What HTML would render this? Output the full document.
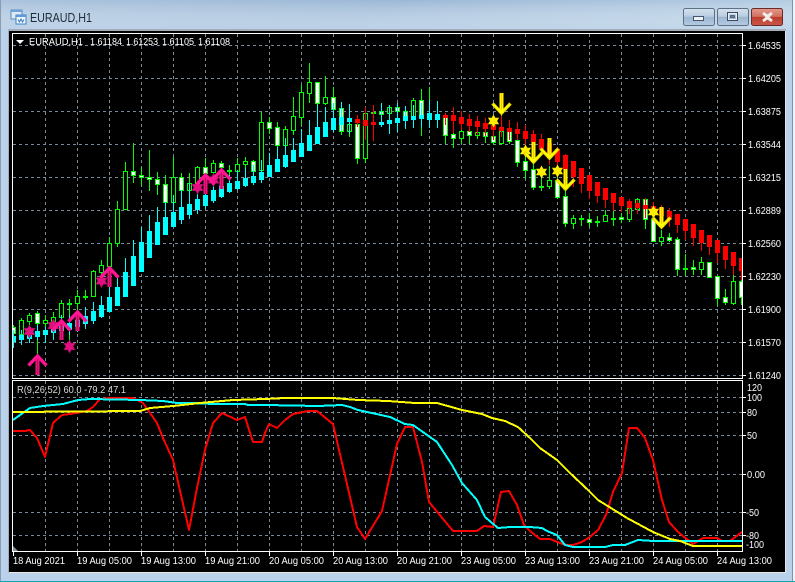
<!DOCTYPE html>
<html><head><meta charset="utf-8"><title>EURAUD,H1</title>
<style>
html,body{margin:0;padding:0;background:#fff;width:795px;height:582px;overflow:hidden}
svg{display:block}
text{font-family:"Liberation Sans",sans-serif;font-size:10px;fill:#fff}
.c{shape-rendering:crispEdges}
</style></head><body>
<svg width="795" height="582" viewBox="0 0 795 582" xmlns="http://www.w3.org/2000/svg">
<defs>
<linearGradient id="tb" x1="0" y1="0" x2="1" y2="0.15"><stop offset="0" stop-color="#a9c2dc"/><stop offset=".5" stop-color="#9cb8d6"/><stop offset="1" stop-color="#b5cde3"/></linearGradient>
<linearGradient id="tb2" x1="0" y1="0" x2="0" y2="1"><stop offset="0" stop-color="#fff" stop-opacity="0"/><stop offset="1" stop-color="#c4d8ec" stop-opacity=".75"/></linearGradient>
<linearGradient id="bb" x1="0" y1="0" x2="0" y2="1"><stop offset="0" stop-color="#d6e2ee"/><stop offset=".48" stop-color="#b7cbe0"/><stop offset=".5" stop-color="#9db6d0"/><stop offset="1" stop-color="#b4cbe2"/></linearGradient>
<linearGradient id="br" x1="0" y1="0" x2="0" y2="1"><stop offset="0" stop-color="#e29a8c"/><stop offset=".48" stop-color="#d2705f"/><stop offset=".5" stop-color="#bd3b2a"/><stop offset="1" stop-color="#c9584a"/></linearGradient>
<path id="st" d="M0-6.5 1.8-3.2 5.6-3.2 3.6 0 5.6 3.2 1.8 3.2 0 6.5-1.8 3.2-5.6 3.2-3.6 0-5.6-3.2-1.8-3.2Z"/>
<g id="ua" fill="none"><path d="M-9 10.5 0 1 9 10.5" stroke="#ff1493" stroke-width="3.4"/><path d="M0 1V20" stroke="#ff1493" stroke-width="4"/><path d="M0 4V20" stroke="#c00f50" stroke-width="1.6"/></g>
<g id="da" fill="none"><path d="M-9-10.5 0-1 9-10.5" stroke="#e8d800" stroke-width="3.4"/><path d="M0-1V-21" stroke="#ffff00" stroke-width="4"/><path d="M0-4V-21" stroke="#ffc800" stroke-width="1.4"/><path d="M-8-9.5 0-1.5 8-9.5" stroke="#ffff00" stroke-width="1.6"/></g>
</defs>

<rect width="795" height="582" fill="#b9d1ea"/>
<rect width="795" height="30" fill="url(#tb)"/>
<rect width="795" height="30" fill="url(#tb2)"/>
<rect x="793" y="0" width="2" height="582" fill="#eef3f8"/>
<rect x="0" y="581" width="795" height="1" fill="#17a2b0"/>
<rect x="0" y="0" width="1" height="581" fill="#8a9cb0"/>
<rect x="792" y="0" width="1" height="581" fill="#7d93a8"/>
<rect x="8" y="29" width="778" height="544" fill="#a5aeb8"/>
<rect x="9" y="31" width="776" height="541" fill="#000"/>
<rect x="785" y="31" width="1" height="541" fill="#e6e6e6"/>
<rect x="9" y="572" width="777" height="1" fill="#e8e8e8"/>

<!-- title -->
<g class="c">
<rect x="11" y="10" width="11" height="9" fill="#dfeaf6" stroke="#5b8fc4"/>
<rect x="16" y="15" width="10" height="9" fill="#f3f8fd" stroke="#3d82c8"/>
<rect x="11" y="10" width="11" height="2" fill="#6fa3d8"/>
<rect x="16" y="15" width="10" height="2" fill="#5f9ad6"/>
</g>
<path d="M18 19.5l1.5 2.5 1.5-3 1.5 3 1.5-2.5" fill="none" stroke="#2f78bf"/>
<text x="30" y="22" style="font-size:12.5px;fill:#1c2a38" textLength="62" lengthAdjust="spacingAndGlyphs">EURAUD,H1</text>

<!-- buttons -->
<g>
<rect x="683.5" y="8.5" width="31" height="17" rx="2" fill="url(#bb)" stroke="#5d7186"/>
<rect x="717.5" y="8.5" width="31" height="17" rx="2" fill="url(#bb)" stroke="#5d7186"/>
<rect x="751.5" y="8.5" width="31" height="17" rx="2" fill="url(#br)" stroke="#6b2a25"/>
<rect x="693.5" y="16.5" width="10" height="4" fill="#eef2f6" stroke="#46566a"/>
<rect x="727.5" y="12.5" width="10" height="8" fill="none" stroke="#3d4c5e"/>
<rect x="728.5" y="13.5" width="8" height="6" fill="none" stroke="#e6edf4"/>
<rect x="730.5" y="15.5" width="4" height="2" fill="#6d8096" stroke="#2f3c4b" stroke-width=".6"/>
<path d="M763 13l4.5 3 4.5-3M763 21l4.5-3 4.5 3M763 13l9 8M772 13l-9 8" fill="none" stroke="#f0ecea" stroke-width="2.6"/>
</g>

<!-- grid -->
<g class="c" fill="none" stroke="#778899" stroke-dasharray="3 3">
<path d="M13 45.5H742M13 78.5H742M13 111.5H742M13 144.5H742M13 177.5H742M13 210.5H742M13 243.5H742M13 276.5H742M13 309.5H742M13 342.5H742M13 375.5H742"/>
<path d="M45.5 34V378M77.5 34V378M109.5 34V378M141.5 34V378M173.5 34V378M205.5 34V378M237.5 34V378M269.5 34V378M301.5 34V378M333.5 34V378M365.5 34V378M397.5 34V378M429.5 34V378M461.5 34V378M493.5 34V378M525.5 34V378M557.5 34V378M589.5 34V378M621.5 34V378M653.5 34V378M685.5 34V378M717.5 34V378"/>
<path d="M13 397.5H742M13 412.5H742M13 435.5H742M13 474.5H742M13 512.5H742M13 535.5H742"/>
<path d="M45.5 381V551M77.5 381V551M109.5 381V551M141.5 381V551M173.5 381V551M205.5 381V551M237.5 381V551M269.5 381V551M301.5 381V551M333.5 381V551M365.5 381V551M397.5 381V551M429.5 381V551M461.5 381V551M493.5 381V551M525.5 381V551M557.5 381V551M589.5 381V551M621.5 381V551M653.5 381V551M685.5 381V551M717.5 381V551"/>
</g>

<!-- candles -->
<svg x="13" y="34" width="729" height="344" viewBox="13 34 729 344" overflow="hidden">
<g class="c">
<path fill="none" stroke="#00ff00" d="M13.5 325V348M21.5 318V345M29.5 313V340M37.5 311V355M45.5 315V327M53.5 312V335M61.5 300V325M69.5 299V347M77.5 290V312M85.5 290V300M93.5 270V297M101.5 260V280M109.5 237V270M117.5 201V247M125.5 162V210M133.5 143V183M141.5 167V186M149.5 150V191M157.5 172V195M165.5 175V205M173.5 157V205M181.5 173V192M189.5 173V192M197.5 166V185M205.5 158V180M213.5 160V178M221.5 161V172M229.5 165V177M237.5 158V175M245.5 157V168M253.5 160V177M261.5 112V180M269.5 117V134M277.5 122V150M285.5 126V148M293.5 97V135M301.5 85V126M309.5 63V103M317.5 82V110M325.5 76V105M333.5 87V118M341.5 102V135M349.5 118V137M357.5 115V164M365.5 107V163M373.5 105V120M381.5 103V120M389.5 105V120M397.5 103V120M405.5 106V122M413.5 98V125M421.5 89V136M429.5 87V127M437.5 101V125M445.5 113V144M453.5 125V148M461.5 125V144M469.5 125V144M477.5 125V139M485.5 125V143M493.5 130V145M501.5 115V145M509.5 125V144M517.5 135V167M525.5 150V179M533.5 160V190M541.5 167V191M549.5 166V189M557.5 175V199M565.5 190V227M573.5 215V229M581.5 215V226M589.5 213V227M597.5 216V227M605.5 210V222M613.5 211V226M621.5 213V223M629.5 199V222M637.5 198V214M645.5 198V229M653.5 215V241M661.5 230V246M669.5 233V242M677.5 237V276M685.5 254V276M693.5 260V275M701.5 257V275M709.5 262V277M717.5 276V306M725.5 289V305M733.5 275V305M741.5 275V305"/>
<g transform="translate(0,.5)" stroke="#00ff00">
<path fill="#fff" d="M11.5 327h4v6h-4zM35.5 313h4v10h-4zM131.5 171h4v4h-4zM139.5 175h4v2h-4zM147.5 177h4v2h-4zM155.5 179h4v5h-4zM163.5 184h4v18h-4zM179.5 177h4v13h-4zM203.5 167h4v6h-4zM219.5 163h4v4h-4zM251.5 161h4v10h-4zM267.5 122h4v6h-4zM275.5 127h4v18h-4zM315.5 82h4v21h-4zM331.5 97h4v12h-4zM339.5 108h4v23h-4zM355.5 124h4v34h-4zM379.5 111h4v3h-4zM395.5 107h4v4h-4zM403.5 111h4v7h-4zM419.5 100h4v16h-4zM427.5 117h4v1h-4zM443.5 115h4v20h-4zM451.5 134h4v4h-4zM467.5 131h4v4h-4zM483.5 132h4v4h-4zM491.5 136h4v6h-4zM507.5 128h4v13h-4zM515.5 140h4v22h-4zM523.5 161h4v9h-4zM531.5 169h4v18h-4zM555.5 180h4v17h-4zM563.5 196h4v27h-4zM587.5 219h4v3h-4zM619.5 217h4v2h-4zM643.5 199h4v20h-4zM651.5 219h4v22h-4zM667.5 237h4v3h-4zM675.5 239h4v30h-4zM691.5 267h4v2h-4zM707.5 262h4v15h-4zM715.5 276h4v22h-4zM723.5 297h4v5h-4zM739.5 281h4v16h-4z"/>
<path fill="#000" d="M19.5 320h4v14h-4zM27.5 315h4v6h-4zM43.5 320h4v3h-4zM51.5 317h4v4h-4zM59.5 303h4v14h-4zM75.5 296h4v7h-4zM91.5 271h4v25h-4zM99.5 265h4v7h-4zM107.5 243h4v23h-4zM115.5 209h4v34h-4zM123.5 171h4v38h-4zM171.5 177h4v25h-4zM187.5 183h4v7h-4zM195.5 167h4v16h-4zM211.5 163h4v9h-4zM235.5 164h4v7h-4zM243.5 161h4v3h-4zM259.5 122h4v48h-4zM283.5 129h4v16h-4zM291.5 116h4v14h-4zM299.5 92h4v25h-4zM307.5 82h4v11h-4zM323.5 97h4v6h-4zM347.5 124h4v7h-4zM363.5 113h4v45h-4zM387.5 107h4v6h-4zM411.5 100h4v17h-4zM435.5 114h4v5h-4zM459.5 131h4v7h-4zM475.5 132h4v3h-4zM499.5 131h4v12h-4zM547.5 180h4v6h-4zM571.5 218h4v5h-4zM603.5 215h4v6h-4zM627.5 208h4v11h-4zM635.5 199h4v10h-4zM659.5 237h4v4h-4zM699.5 262h4v7h-4zM731.5 281h4v22h-4z"/>
</g>
<path fill="none" stroke="#00ff00" stroke-width="2" d="M67 304h5M83 297h5M227 171h5M371 113h5M539 187h5M579 219h5M595 222h5M611 219h5M683 269h5"/>

<path fill="none" stroke="#00ffff" d="M13.5 330V348M21.5 330V345M29.5 327V343M37.5 325V340M45.5 327V343M53.5 320V340M61.5 315V335M69.5 315V335M77.5 310V332M85.5 307V329M93.5 302V324M101.5 296V318M109.5 287V312M117.5 278V306M125.5 258V297M133.5 240V286M141.5 227V272M149.5 215V258M157.5 207V245M165.5 202V235M173.5 195V227M181.5 190V224M189.5 183V219M197.5 183V214M205.5 180V209M213.5 175V203M221.5 177V198M229.5 175V193M237.5 170V190M245.5 168V187M253.5 165V185M261.5 160V183M269.5 153V177M277.5 147V172M285.5 138V168M293.5 138V162M301.5 129V157M309.5 120V151M317.5 105V144M325.5 107V137M333.5 103V132M341.5 102V131M349.5 104V134M381.5 103V127M389.5 105V134M397.5 103V132M405.5 106V129M413.5 105V128M421.5 103V127M429.5 100V128M437.5 101V128"/>
<path fill="none" stroke="#00ffff" stroke-width="5" d="M13.5 336V342M21.5 335V340M29.5 334V339M37.5 331V337M45.5 330V335M53.5 327V333M61.5 325V331M69.5 323V330M77.5 320V327M85.5 316V324M93.5 311V321M101.5 305V317M109.5 297V312M117.5 287V306M125.5 272V297M133.5 256V286M141.5 242V272M149.5 231V258M157.5 222V245M165.5 217V235M173.5 212V227M181.5 207V220M189.5 204V215M197.5 199V210M205.5 195V206M213.5 190V201M221.5 186V197M229.5 183V192M237.5 181V189M245.5 178V186M253.5 176V183M261.5 172V180M269.5 165V177M277.5 159V172M285.5 155V167M293.5 150V162M301.5 143V157M309.5 135V151M317.5 127V144M325.5 122V137M333.5 118V130M341.5 117V125M349.5 118V122M381.5 122V125M389.5 120V124M397.5 118V123M405.5 116V121M413.5 116V120M421.5 115V119M429.5 113V120M437.5 114V120"/>
<path fill="none" stroke="#ff0000" d="M357.5 115V127M365.5 107V140M373.5 105V141M445.5 113V125M453.5 107V133M461.5 111V130M469.5 114V132M477.5 116V135M485.5 118V136M493.5 120V140M501.5 116V137M509.5 120V140M517.5 122V140M525.5 125V150M533.5 130V150M541.5 134V155M549.5 138V165M557.5 147V170M565.5 154V180M573.5 161V187M581.5 168V193M589.5 175V199M597.5 182V203M605.5 188V208M613.5 193V211M621.5 197V212M629.5 199V214M637.5 200V214M645.5 198V218M653.5 202V220M661.5 205V225M669.5 208V227M677.5 214V233M685.5 219V240M693.5 224V246M701.5 230V251M709.5 235V255M717.5 240V263M725.5 246V269M733.5 252V275M741.5 258V280"/>
<path fill="none" stroke="#ff0000" stroke-width="5" d="M357.5 119V123M365.5 120V126M373.5 122V125M445.5 115V118M453.5 115V121M461.5 117V124M469.5 119V126M477.5 121V127M485.5 123V129M493.5 125V130M501.5 127V131M509.5 128V132M517.5 129V134M525.5 131V139M533.5 134V142M541.5 139V149M549.5 143V156M557.5 149V162M565.5 155V169M573.5 161V177M581.5 168V184M589.5 175V191M597.5 182V196M605.5 188V200M613.5 193V203M621.5 197V206M629.5 201V208M637.5 203V208M645.5 205V209M653.5 206V213M661.5 208V216M669.5 211V220M677.5 214V225M685.5 219V231M693.5 224V238M701.5 230V243M709.5 235V247M717.5 240V253M725.5 246V260M733.5 252V266M741.5 258V271"/>
</g>

<!-- stars & arrows -->
<g fill="#e0107f" stroke="#a00c60" stroke-width=".6">
<use href="#st" x="29.5" y="331.5"/><use href="#st" x="53.5" y="325.5"/><use href="#st" x="69.5" y="346.5"/><use href="#st" x="101.5" y="281"/><use href="#st" x="197.5" y="187.5"/><use href="#st" x="213.5" y="180"/>
</g>
<use href="#ua" x="37.5" y="355"/><use href="#ua" x="61.5" y="320"/><use href="#ua" x="77.5" y="311"/><use href="#ua" x="109.5" y="267"/><use href="#ua" x="205.5" y="174"/><use href="#ua" x="221.5" y="169"/>
<g fill="#ffee00">
<use href="#st" x="493.5" y="121"/><use href="#st" x="525.5" y="151"/><use href="#st" x="541.5" y="172"/><use href="#st" x="557.5" y="171"/><use href="#st" x="653.5" y="212"/>
</g>
<use href="#da" x="501.5" y="114"/><use href="#da" x="533.5" y="163"/><use href="#da" x="549.5" y="159"/><use href="#da" x="565.5" y="190"/><use href="#da" x="661.5" y="228"/>
</svg>

<!-- indicator lines -->
<svg x="13" y="381" width="729" height="170" viewBox="13 381 729 170" overflow="hidden">
<g fill="none" stroke-width="2" stroke-linejoin="round" class="c">
<path stroke="#ff0000" d="M13 431 25 431 30 430 37 438 45 457 53 423 62 415 70 414 87 411 93 407 100 399 110 398 133 398 143 403 157 423 163 438 173 460 189 530 197 488 205 450 213 423 222 413 237 420 245 417 253 442 262 442 265 433 269 424 277 428 285 420 293 414 308 411 317 411 333 424 357 527 365 539 382 511 397 444 405 427 413 427 422 462 429 502 453 531 477 531 484 526 493 527 501 492 509 491 517 505 524 525 530 531 540 539 550 539 565 545 573 545 582 542 590 537 598 530 606 515 613 492 622 473 629 428 637 428 645 438 653 460 662 500 669 522 678 532 693 544 703 538 717 538 722 541 730 541 742 532"/>
<path stroke="#00ffff" d="M13 420 20 415 30 408 43 406 63 404 78 400 90 399 140 400 163 401 177 403 193 403 213 404 245 404 248 405 265 405 318 406 342 405 350 407 358 410 390 417 405 424 413 425 437 442 452 465 462 483 477 500 485 517 498 528 510 527 530 527 542 528 547 531 557 535 565 545 573 547 605 547 613 545 625 545 638 540 653 541 742 541"/>
<path stroke="#ffff00" d="M13 412 140 411 150 408 173 406 200 403 233 400 265 399 285 398 333 398 358 400 388 401 415 403 437 403 462 410 482 414 492 418 505 421 518 427 530 438 540 448 557 460 570 473 588 490 598 500 627 518 653 532 670 539 680 541 693 546 742 546"/>
</g>
</svg>
<path d="M13 546 18 551H13Z" fill="#8a949e"/>

<!-- frames -->
<g class="c" fill="#fff">
<rect x="12" y="33" width="731" height="1"/>
<rect x="12" y="378" width="731" height="1"/>
<rect x="12" y="380" width="731" height="1"/>
<rect x="12" y="551" width="731" height="1"/>
<rect x="12" y="33" width="1" height="346"/>
<rect x="12" y="380" width="1" height="172"/>
<rect x="742" y="33" width="1" height="346"/>
<rect x="742" y="380" width="1" height="172"/>
<path d="M743 45h3v1h-3zM743 78h3v1h-3zM743 111h3v1h-3zM743 144h3v1h-3zM743 177h3v1h-3zM743 210h3v1h-3zM743 243h3v1h-3zM743 276h3v1h-3zM743 309h3v1h-3zM743 342h3v1h-3zM743 375h3v1h-3zM743 397h3v1h-3zM743 412h3v1h-3zM743 435h3v1h-3zM743 474h3v1h-3zM743 512h3v1h-3zM743 535h3v1h-3z"/>
<path d="M13 552h1v4h-1zM77 552h1v4h-1zM141 552h1v4h-1zM205 552h1v4h-1zM269 552h1v4h-1zM333 552h1v4h-1zM397 552h1v4h-1zM461 552h1v4h-1zM525 552h1v4h-1zM589 552h1v4h-1zM653 552h1v4h-1zM717 552h1v4h-1z"/>
</g>

<!-- labels -->
<path d="M16 40h8l-4 4z" fill="#fff"/>
<g lengthAdjust="spacingAndGlyphs">
<text x="29" y="45" textLength="54" lengthAdjust="spacingAndGlyphs">EURAUD,H1</text>
<text x="90" y="45" textLength="32" lengthAdjust="spacingAndGlyphs">1.61184</text>
<text x="126" y="45" textLength="32" lengthAdjust="spacingAndGlyphs">1.61253</text>
<text x="162" y="45" textLength="32" lengthAdjust="spacingAndGlyphs">1.61105</text>
<text x="198" y="45" textLength="32" lengthAdjust="spacingAndGlyphs">1.61108</text>
<text x="17" y="393" textLength="109" lengthAdjust="spacingAndGlyphs" style="fill:#d8d8d8">R(9,26,52) 60.0 -79.2 47.1</text>
</g>

<g>
<text x="748" y="49" textLength="33" lengthAdjust="spacingAndGlyphs">1.64535</text>
<text x="748" y="82" textLength="33" lengthAdjust="spacingAndGlyphs">1.64205</text>
<text x="748" y="115" textLength="33" lengthAdjust="spacingAndGlyphs">1.63875</text>
<text x="748" y="148" textLength="33" lengthAdjust="spacingAndGlyphs">1.63544</text>
<text x="748" y="181" textLength="33" lengthAdjust="spacingAndGlyphs">1.63215</text>
<text x="748" y="214" textLength="33" lengthAdjust="spacingAndGlyphs">1.62889</text>
<text x="748" y="247" textLength="33" lengthAdjust="spacingAndGlyphs">1.62560</text>
<text x="748" y="280" textLength="33" lengthAdjust="spacingAndGlyphs">1.62230</text>
<text x="748" y="313" textLength="33" lengthAdjust="spacingAndGlyphs">1.61900</text>
<text x="748" y="346" textLength="33" lengthAdjust="spacingAndGlyphs">1.61570</text>
<text x="748" y="379" textLength="33" lengthAdjust="spacingAndGlyphs">1.61240</text>
<text x="747" y="391" textLength="15" lengthAdjust="spacingAndGlyphs">120</text>
<text x="747" y="401" textLength="15" lengthAdjust="spacingAndGlyphs">100</text>
<text x="747" y="416" textLength="10" lengthAdjust="spacingAndGlyphs">80</text>
<text x="747" y="439" textLength="10" lengthAdjust="spacingAndGlyphs">50</text>
<text x="747" y="478" textLength="18" lengthAdjust="spacingAndGlyphs">0.00</text>
<text x="746" y="516" textLength="13" lengthAdjust="spacingAndGlyphs">-50</text>
<text x="746" y="539" textLength="13" lengthAdjust="spacingAndGlyphs">-80</text>
<text x="746" y="548" textLength="18" lengthAdjust="spacingAndGlyphs">-100</text>
</g>
<g>
<text x="13" y="564" textLength="52" lengthAdjust="spacingAndGlyphs">18 Aug 2021</text>
<text x="77" y="564" textLength="55" lengthAdjust="spacingAndGlyphs">19 Aug 05:00</text>
<text x="141" y="564" textLength="55" lengthAdjust="spacingAndGlyphs">19 Aug 13:00</text>
<text x="205" y="564" textLength="55" lengthAdjust="spacingAndGlyphs">19 Aug 21:00</text>
<text x="269" y="564" textLength="55" lengthAdjust="spacingAndGlyphs">20 Aug 05:00</text>
<text x="333" y="564" textLength="55" lengthAdjust="spacingAndGlyphs">20 Aug 13:00</text>
<text x="397" y="564" textLength="55" lengthAdjust="spacingAndGlyphs">20 Aug 21:00</text>
<text x="461" y="564" textLength="55" lengthAdjust="spacingAndGlyphs">23 Aug 05:00</text>
<text x="525" y="564" textLength="55" lengthAdjust="spacingAndGlyphs">23 Aug 13:00</text>
<text x="589" y="564" textLength="55" lengthAdjust="spacingAndGlyphs">23 Aug 21:00</text>
<text x="653" y="564" textLength="55" lengthAdjust="spacingAndGlyphs">24 Aug 05:00</text>
<text x="717" y="564" textLength="55" lengthAdjust="spacingAndGlyphs">24 Aug 13:00</text>
</g>
</svg>
</body></html>
